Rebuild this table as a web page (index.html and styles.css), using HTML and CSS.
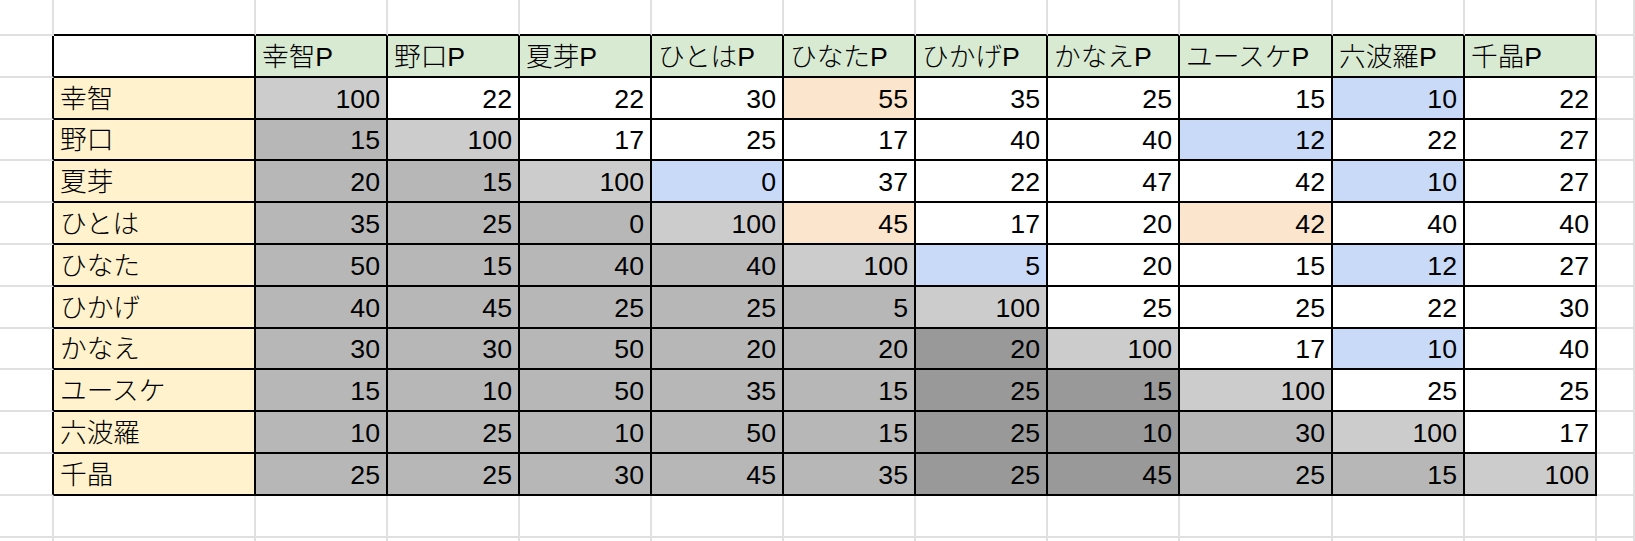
FILE: index.html
```html
<!DOCTYPE html>
<html lang="ja">
<head>
<meta charset="utf-8">
<title>Sheet</title>
<link rel="stylesheet" href="styles.css">
</head>
<body>
<table class="sheet">
  <colgroup>
    <col class="w-a"><col class="w-name"><col class="w-n"><col class="w-n"><col class="w-n"><col class="w-n"><col class="w-n"><col class="w-n"><col class="w-n"><col class="w-wide"><col class="w-n"><col class="w-n"><col class="w-rest">
  </colgroup>
  <tr class="row-top">
    <td></td><td class="above"></td><td class="above"></td><td class="above"></td><td class="above"></td><td class="above"></td><td class="above"></td><td class="above"></td><td class="above"></td><td class="above"></td><td class="above"></td><td class="above"></td><td></td>
  </tr>
  <tr class="row-t">
    <td class="lead"></td><td class="c"></td><td class="c h">幸智P</td><td class="c h">野口P</td><td class="c h">夏芽P</td><td class="c h">ひとはP</td><td class="c h">ひなたP</td><td class="c h">ひかげP</td><td class="c h">かなえP</td><td class="c h">ユースケP</td><td class="c h">六波羅P</td><td class="c h">千晶P</td><td></td>
  </tr>
  <tr class="row-t">
    <td class="lead"></td><td class="c nm">幸智</td><td class="c v d">100</td><td class="c v">22</td><td class="c v">22</td><td class="c v">30</td><td class="c v o">55</td><td class="c v">35</td><td class="c v">25</td><td class="c v">15</td><td class="c v b">10</td><td class="c v">22</td><td></td>
  </tr>
  <tr class="row-t">
    <td class="lead"></td><td class="c nm">野口</td><td class="c v g">15</td><td class="c v d">100</td><td class="c v">17</td><td class="c v">25</td><td class="c v">17</td><td class="c v">40</td><td class="c v">40</td><td class="c v b">12</td><td class="c v">22</td><td class="c v">27</td><td></td>
  </tr>
  <tr class="row-t">
    <td class="lead"></td><td class="c nm">夏芽</td><td class="c v g">20</td><td class="c v g">15</td><td class="c v d">100</td><td class="c v b">0</td><td class="c v">37</td><td class="c v">22</td><td class="c v">47</td><td class="c v">42</td><td class="c v b">10</td><td class="c v">27</td><td></td>
  </tr>
  <tr class="row-t">
    <td class="lead"></td><td class="c nm">ひとは</td><td class="c v g">35</td><td class="c v g">25</td><td class="c v g">0</td><td class="c v d">100</td><td class="c v o">45</td><td class="c v">17</td><td class="c v">20</td><td class="c v o">42</td><td class="c v">40</td><td class="c v">40</td><td></td>
  </tr>
  <tr class="row-t">
    <td class="lead"></td><td class="c nm">ひなた</td><td class="c v g">50</td><td class="c v g">15</td><td class="c v g">40</td><td class="c v g">40</td><td class="c v d">100</td><td class="c v b">5</td><td class="c v">20</td><td class="c v">15</td><td class="c v b">12</td><td class="c v">27</td><td></td>
  </tr>
  <tr class="row-t">
    <td class="lead"></td><td class="c nm">ひかげ</td><td class="c v g">40</td><td class="c v g">45</td><td class="c v g">25</td><td class="c v g">25</td><td class="c v g">5</td><td class="c v d">100</td><td class="c v">25</td><td class="c v">25</td><td class="c v">22</td><td class="c v">30</td><td></td>
  </tr>
  <tr class="row-t">
    <td class="lead"></td><td class="c nm">かなえ</td><td class="c v g">30</td><td class="c v g">30</td><td class="c v g">50</td><td class="c v g">20</td><td class="c v g">20</td><td class="c v k">20</td><td class="c v d">100</td><td class="c v">17</td><td class="c v b">10</td><td class="c v">40</td><td></td>
  </tr>
  <tr class="row-t">
    <td class="lead"></td><td class="c nm">ユースケ</td><td class="c v g">15</td><td class="c v g">10</td><td class="c v g">50</td><td class="c v g">35</td><td class="c v g">15</td><td class="c v k">25</td><td class="c v k">15</td><td class="c v d">100</td><td class="c v">25</td><td class="c v">25</td><td></td>
  </tr>
  <tr class="row-t">
    <td class="lead"></td><td class="c nm">六波羅</td><td class="c v g">10</td><td class="c v g">25</td><td class="c v g">10</td><td class="c v g">50</td><td class="c v g">15</td><td class="c v k">25</td><td class="c v k">10</td><td class="c v g">30</td><td class="c v d">100</td><td class="c v">17</td><td></td>
  </tr>
  <tr class="row-t">
    <td class="lead"></td><td class="c nm">千晶</td><td class="c v g">25</td><td class="c v g">25</td><td class="c v g">30</td><td class="c v g">45</td><td class="c v g">35</td><td class="c v k">25</td><td class="c v k">45</td><td class="c v g">25</td><td class="c v g">15</td><td class="c v d">100</td><td></td>
  </tr>
  <tr class="row-after">
    <td></td><td></td><td></td><td></td><td></td><td></td><td></td><td></td><td></td><td></td><td></td><td></td><td></td>
  </tr>
  <tr class="row-tail">
    <td></td><td></td><td></td><td></td><td></td><td></td><td></td><td></td><td></td><td></td><td></td><td></td><td></td>
  </tr>
</table>
</body>
</html>
```
FILE: styles.css
```css
html, body {
  margin: 0;
  padding: 0;
  background: #ffffff;
  overflow: hidden;
}

body {
  font-family: "Liberation Sans", Arial, "Noto Sans CJK JP", sans-serif;
  color: #000000;
}

.sheet {
  border-collapse: separate;
  border-spacing: 0;
  table-layout: fixed;
  width: 1635px;
}

.w-a { width: 54px; }
.w-name { width: 202px; }
.w-n { width: 132px; }
.w-wide { width: 153px; }
.w-rest { width: 38px; }

.sheet td {
  box-sizing: border-box;
  border-right: 2px solid #e0e0e0;
  border-bottom: 2px solid #e0e0e0;
  padding: 0 6px 5px 6px;
  font-size: 26.7px;
  line-height: 27px;
  vertical-align: bottom;
  white-space: nowrap;
  overflow: hidden;
  text-align: left;
}

.row-top td { height: 36px; }
.row-t td { height: 41.8px; }
.row-after td { height: 42px; }
.row-tail td {
  height: 3.2px;
  padding: 0;
  border-bottom: 0;
}

.sheet td.above { border-bottom-color: #000000; }
.sheet td.lead { border-right-color: #000000; }

.sheet td.c {
  border-right-color: #000000;
  border-bottom-color: #000000;
  background: #ffffff;
}

.sheet td.v { text-align: right; }

.sheet td.h,
.sheet td.nm {
  font-family: "Liberation Sans", Arial, "Noto Sans CJK JP", sans-serif;
  font-weight: 300;
}

.sheet td.h { background: #d9ead3; }
.sheet td.nm { background: #fff2cc; }
.sheet td.d { background: #cccccc; }
.sheet td.g { background: #b7b7b7; }
.sheet td.k { background: #999999; }
.sheet td.o { background: #fce5cd; }
.sheet td.b { background: #c9daf8; }
```
